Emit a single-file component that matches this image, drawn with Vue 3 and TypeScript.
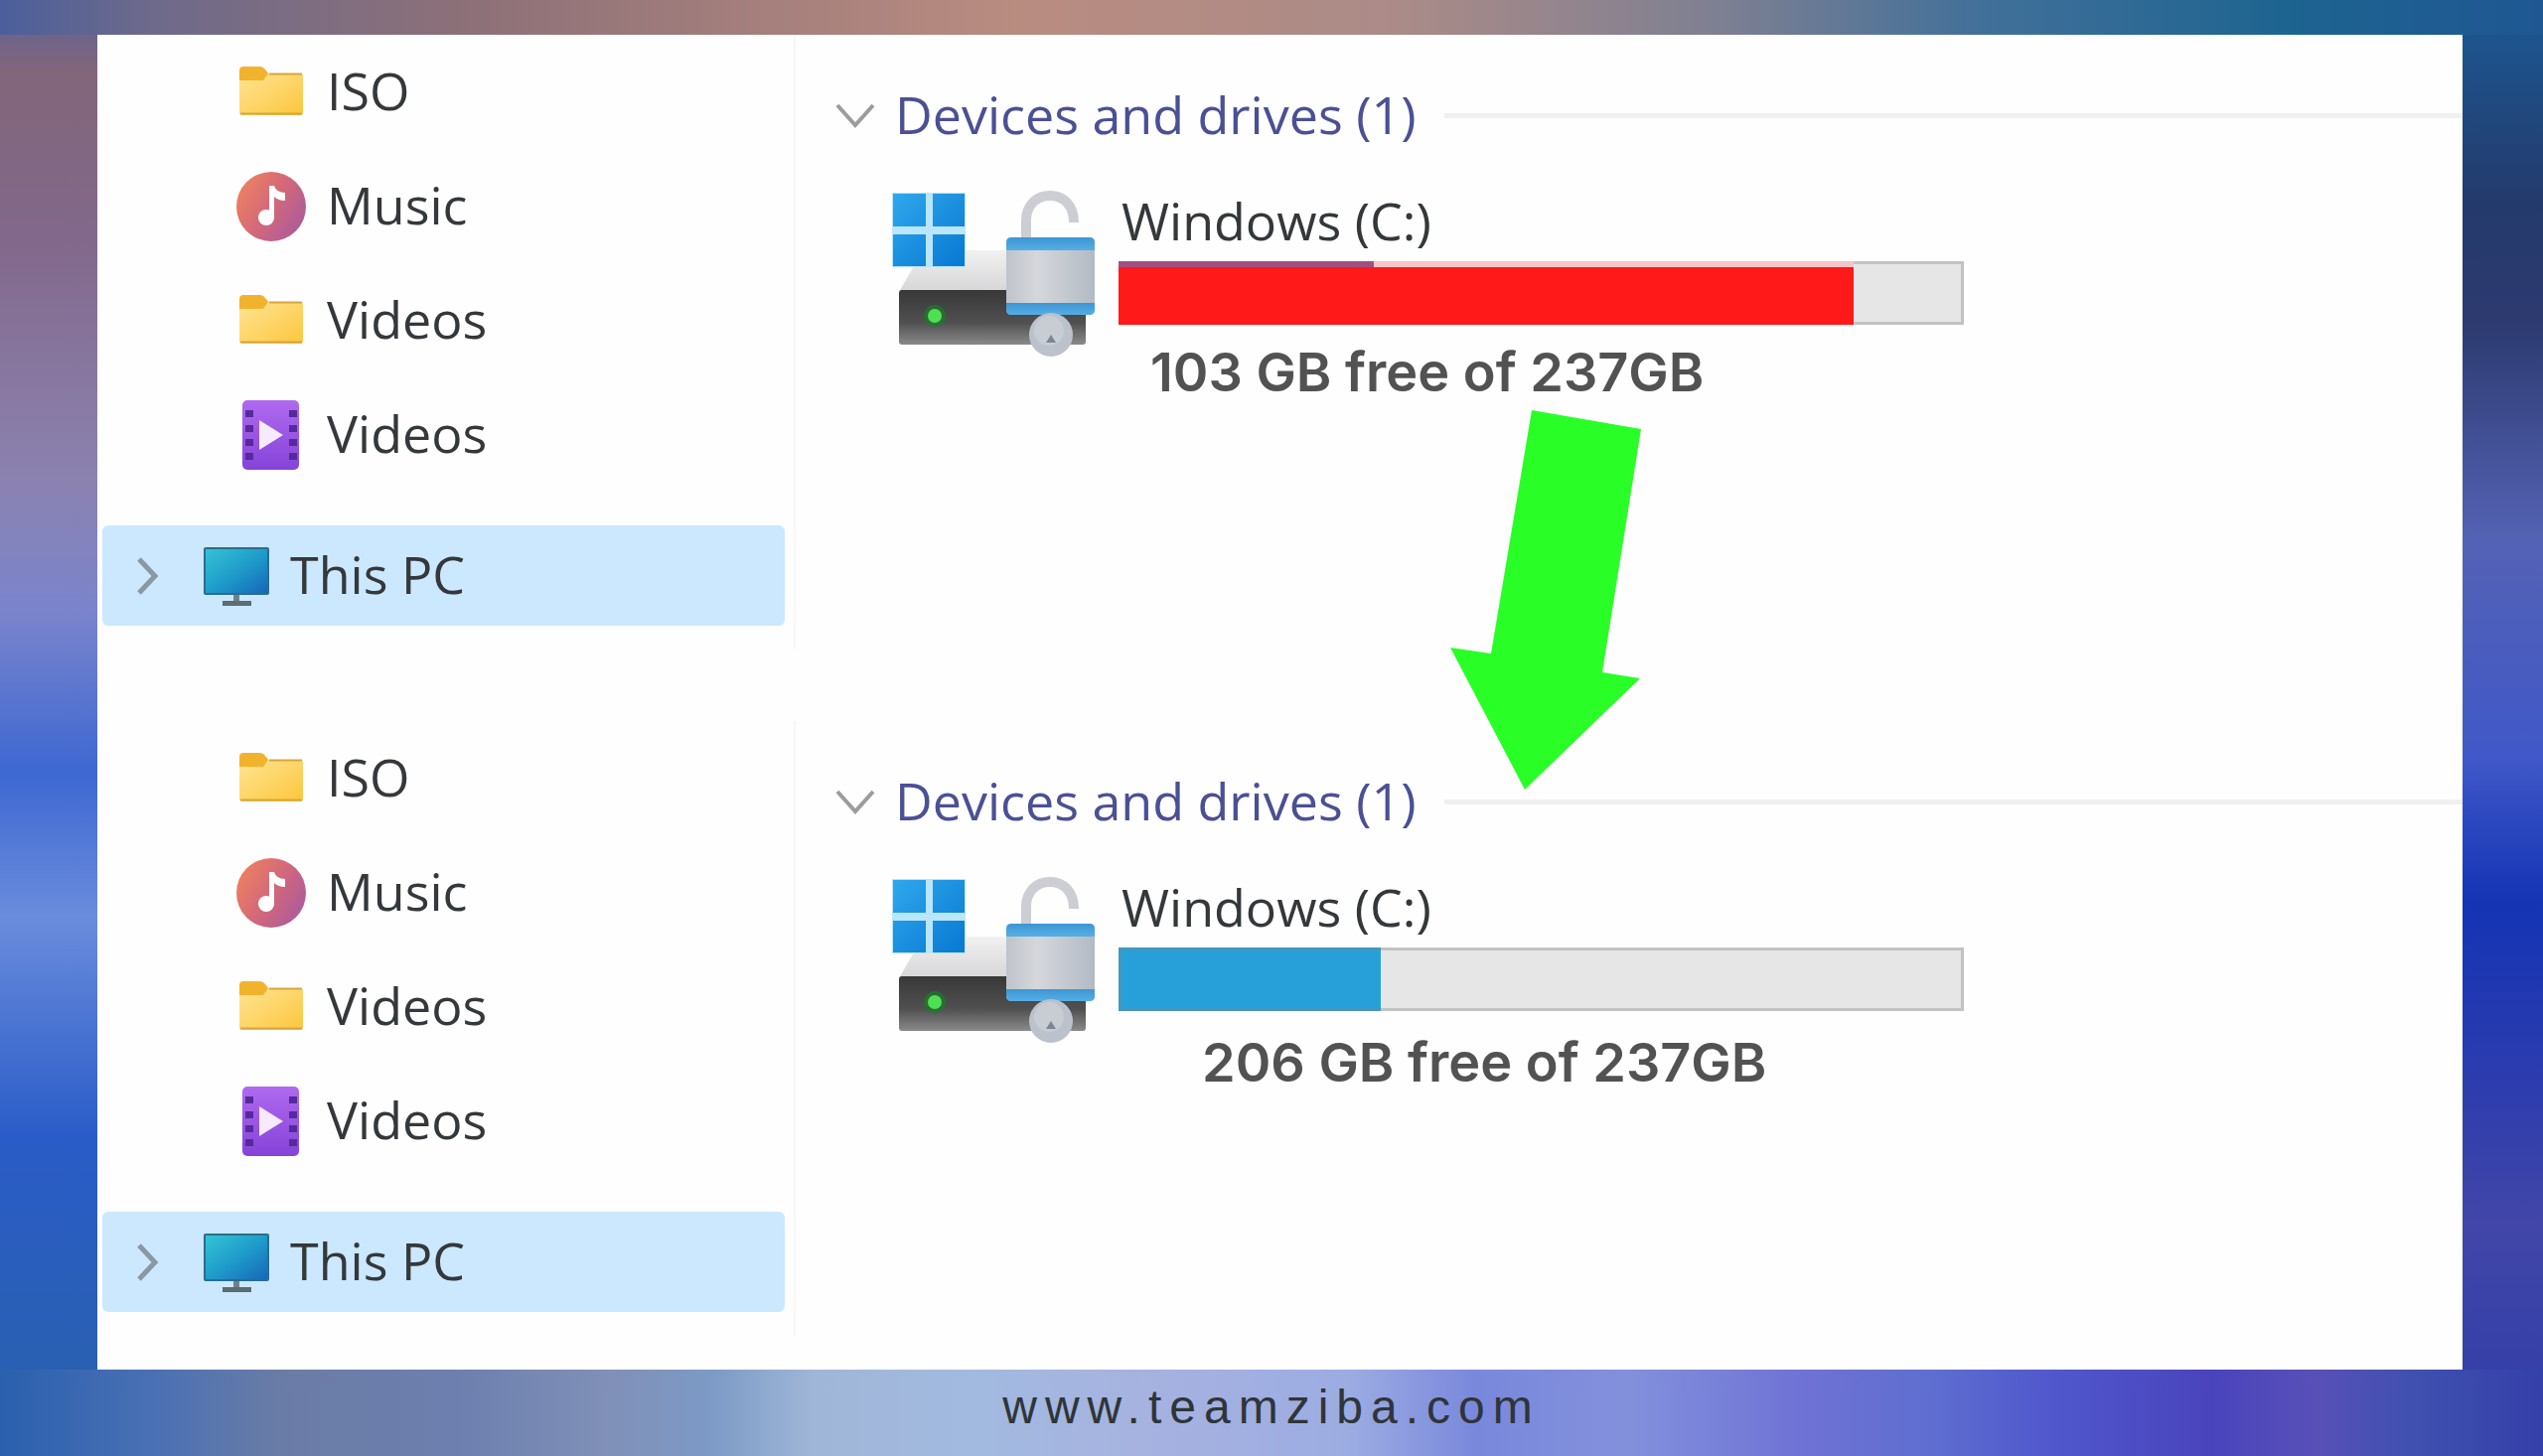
<script setup lang="ts">
interface Place {
  name: string
  icon: 'folder' | 'music' | 'film'
}

interface Snapshot {
  id: string
  state: 'low' | 'roomy'
  used: number
  free: string
}

const places: Place[] = [
  { name: 'ISO', icon: 'folder' },
  { name: 'Music', icon: 'music' },
  { name: 'Videos', icon: 'folder' },
  { name: 'Videos', icon: 'film' },
]

const snapshots: Snapshot[] = [
  { id: 'before', state: 'low', used: 87, free: '103 GB free of 237GB' },
  { id: 'after', state: 'roomy', used: 31, free: '206 GB free of 237GB' },
]
</script>

<template>
  <div class="page">
    <svg class="defs" aria-hidden="true">
      <defs>
        <linearGradient id="g-folder" x1="0" y1="0" x2="1" y2="1">
          <stop offset="0" stop-color="#ffe494" />
          <stop offset="1" stop-color="#fcc63c" />
        </linearGradient>
        <linearGradient id="g-music" x1="0" y1="0.2" x2="1" y2="0.8">
          <stop offset="0" stop-color="#ee8260" />
          <stop offset="0.5" stop-color="#d3687a" />
          <stop offset="1" stop-color="#a95a9e" />
        </linearGradient>
        <linearGradient id="g-film" x1="0" y1="0" x2="0" y2="1">
          <stop offset="0" stop-color="#b06af0" />
          <stop offset="1" stop-color="#8543d8" />
        </linearGradient>
        <linearGradient id="g-screen" x1="0" y1="0" x2="1" y2="1">
          <stop offset="0" stop-color="#35c3d4" />
          <stop offset="0.5" stop-color="#1f9dcb" />
          <stop offset="1" stop-color="#1668b8" />
        </linearGradient>
        <linearGradient id="g-win" x1="0" y1="0" x2="1" y2="1">
          <stop offset="0" stop-color="#2fa8ec" />
          <stop offset="1" stop-color="#0878d2" />
        </linearGradient>
        <linearGradient id="g-front" x1="0" y1="0" x2="0" y2="1">
          <stop offset="0" stop-color="#383838" />
          <stop offset="0.6" stop-color="#505050" />
          <stop offset="1" stop-color="#8a8a8a" />
        </linearGradient>
        <linearGradient id="g-top" x1="0" y1="0" x2="0" y2="1">
          <stop offset="0" stop-color="#f1f1f1" />
          <stop offset="1" stop-color="#d6d6d8" />
        </linearGradient>
        <linearGradient id="g-lock" x1="0" y1="0" x2="1" y2="0">
          <stop offset="0" stop-color="#bfc3ca" />
          <stop offset="0.35" stop-color="#d5d7dc" />
          <stop offset="1" stop-color="#b3bac4" />
        </linearGradient>
        <linearGradient id="g-band" x1="0" y1="0" x2="0" y2="1">
          <stop offset="0" stop-color="#3d96d2" />
          <stop offset="1" stop-color="#55aee4" />
        </linearGradient>
      </defs>
    </svg>

    <main class="card">
      <section v-for="shot in snapshots" :key="shot.id" class="panel" :class="shot.state">
        <nav class="sidebar">
          <a v-for="(place, i) in places" :key="i" class="place" href="#">
            <svg v-if="place.icon === 'folder'" class="place-icon" viewBox="0 0 72 72">
              <path d="M4 14q0-4 4-4h17q3 0 5 3l4 5v8H4z" fill="#f2b32c" />
              <path d="M4 24h24l5-7h32q3 0 3 3v36q0 3-3 3H7q-3 0-3-3z" fill="url(#g-folder)" />
              <path d="M34 17.500h33M5 57.500h62" stroke="#d8a53c" stroke-width="2" />
            </svg>
            <svg v-else-if="place.icon === 'music'" class="place-icon" viewBox="0 0 72 72">
              <circle cx="36" cy="36" r="35" fill="url(#g-music)" />
              <ellipse cx="31" cy="47" rx="8" ry="8" fill="#fff" />
              <path d="M34 15h5q2 7 11 7v8q-7 0-11-4v22h-5z" fill="#fff" />
            </svg>
            <svg v-else class="place-icon" viewBox="0 0 72 72">
              <rect x="7" y="1" width="57" height="70" rx="5" fill="url(#g-film)" />
              <path
                d="M10 11h8v7h-8zM10 26h8v7h-8zM10 40h8v7h-8zM10 54h8v7h-8zM54 11h8v7h-8zM54 26h8v7h-8zM54 40h8v7h-8zM54 54h8v7h-8z"
                fill="#552a9c"
              />
              <path d="M24 21l24 15-24 15z" fill="#f6eaff" />
            </svg>
            <span class="label">{{ place.name }}</span>
          </a>
          <a class="this-pc" href="#" aria-current="page">
            <svg class="twist" viewBox="0 0 24 40">
              <path d="M3 3l16 17L3 37" fill="none" stroke="#8b98a3" stroke-width="5" />
            </svg>
            <svg class="pc-icon" viewBox="0 0 68 62">
              <rect x="1" y="2" width="66" height="48" rx="2" fill="#2b6d8c" />
              <rect x="3" y="4" width="62" height="44" fill="url(#g-screen)" />
              <path d="M31 50h6v6h-6z" fill="#6f8088" />
              <path d="M20 56h29v5H20z" fill="#5c6c74" />
            </svg>
            <span class="label">This PC</span>
          </a>
        </nav>

        <div class="content">
          <h2 class="group">
            <button class="group-toggle" type="button" aria-expanded="true">
              <svg class="fold" viewBox="0 0 40 26">
                <path d="M2 2l18 20L38 2" fill="none" stroke="#9c9c9c" stroke-width="4" />
              </svg>
              <span class="label">Devices and drives (1)</span>
            </button>
          </h2>

          <div class="drive">
            <svg class="drive-icon" viewBox="0 0 212 172">
              <path d="M34 62h160l4 42H10z" fill="url(#g-top)" />
              <rect x="10" y="102" width="188" height="55" rx="3" fill="url(#g-front)" />
              <circle cx="46" cy="128" r="11" fill="#1e7a2a" opacity="0.7" />
              <circle cx="46" cy="128" r="7" fill="#4ee052" />
              <rect x="3" y="4" width="74" height="75" fill="#b9e6fb" />
              <path
                d="M4 5h33v33H4zM44 5h32v33H44zM4 46h33v32H4zM44 46h32v32H44z"
                fill="url(#g-win)"
              />
              <path
                d="M138 52V32c0-15 10-25 24-25 14 0 24 10 24 27"
                fill="none"
                stroke="#cdced3"
                stroke-width="10"
              />
              <rect x="118" y="50" width="89" height="77" rx="5" fill="url(#g-lock)" />
              <path d="M118 62v-8q0-5 5-5h79q5 0 5 5v8z" fill="url(#g-band)" />
              <path d="M118 115h89v7q0 5-5 5h-79q-5 0-5-5z" fill="url(#g-band)" />
              <circle cx="163" cy="147" r="22" fill="#bcc2cb" />
              <circle cx="161" cy="143" r="15" fill="#c8cdd4" />
              <path d="M163 147l5 8h-10z" fill="#7d8794" />
            </svg>
            <div class="drive-info">
              <div class="drive-name">Windows (C:)</div>
              <div
                class="bar"
                role="meter"
                aria-label="Used space"
                aria-valuemin="0"
                aria-valuemax="100"
                :aria-valuenow="shot.used"
              >
                <div class="fill" :style="{ width: shot.used + '%' }"></div>
              </div>
              <div class="free">{{ shot.free }}</div>
            </div>
          </div>
        </div>
      </section>

      <svg class="arrow" viewBox="0 0 194 384" aria-hidden="true">
        <path d="M83 1l110 19-39 245 38 6L76 383 1 240l41 6z" fill="#29ff27" />
      </svg>
    </main>

    <footer class="footer"><a href="#">www.teamziba.com</a></footer>
  </div>
</template>

<style>
body {
  margin: 0;
}
</style>

<style scoped>
.page {
  display: flex;
  flex-direction: column;
  min-height: 100vh;
  padding: 35px 81px 0 98px;
  box-sizing: border-box;
  font-family: "Open Sans", "Noto Sans", sans-serif;
  font-size: 52px;
  line-height: 72px;
  color: #35383b;
  background:
    linear-gradient(90deg, #2a60ae 0%, #4a70b4 6%, #6a7ca6 11%, #6c7fae 18%, #8090b8 24%, #7c9ac6 28%, #a0b6d8 32%, #a2bae0 38%, #a6b2e0 45%, #9cace2 53%, #7a88dc 58%, #8290dc 64%, #6e72d4 71%, #5e6ed0 76%, #4f56cc 81%, #4a44bc 87%, #5850b8 91%, #3f50b0 95%, #3540a8 100%) bottom / 100% 87px no-repeat,
    linear-gradient(90deg, #4b5f9c 0%, #6e6a8a 6%, #8c7078 18%, #b98c80 40%, #ab8b88 55%, #7c7f92 68%, #41709a 78%, #1d6490 90%, #1f5792 100%) top / 100% 35px no-repeat,
    linear-gradient(180deg, #5c6298 0%, #82667a 5%, #82688a 16%, #8b82b0 33%, #7a84cc 42%, #3e68d2 53%, #6a8cdc 63%, #2a5cc8 78%, #2a60b2 94%) left / 98px 100% no-repeat,
    linear-gradient(180deg, #1c5a94 0%, #243a6c 14%, #2c3a70 22%, #5462b4 37%, #4058c8 52%, #1434b4 62%, #2c3cae 74%, #4246a8 84%, #3540a8 94%) right / 81px 100% no-repeat;
}

.defs {
  position: absolute;
  width: 0;
  height: 0;
}

.card {
  position: relative;
  display: flex;
  flex-direction: column;
  background: #fefefe;
}

.panel {
  display: flex;
  padding-bottom: 34px;
}

.panel:first-child {
  padding-bottom: 72px;
}

.sidebar {
  display: flex;
  flex-direction: column;
  width: 703px;
  flex: none;
  padding: 0 9px 24px 5px;
  box-sizing: border-box;
  border-right: 2px solid #f7f7f7;
}

.place,
.this-pc {
  display: flex;
  align-items: center;
  color: inherit;
  text-decoration: none;
}

.label {
  padding-bottom: 3px;
}

.place {
  gap: 20px;
  height: 115px;
  padding-left: 134px;
}

.place-icon {
  width: 72px;
  height: 72px;
}

.this-pc {
  height: 101px;
  margin-top: 34px;
  padding-left: 34px;
  border-radius: 6px;
  background: #cce8ff;
}

.twist {
  width: 24px;
  height: 40px;
  margin-right: 43px;
}

.pc-icon {
  width: 68px;
  height: 62px;
  margin-right: 20px;
}

.content {
  flex: 1;
  min-width: 0;
  padding: 44px 0 0 40px;
}

.group {
  display: flex;
  align-items: center;
  gap: 28px;
  margin: 0;
  font: inherit;
}

.group::after {
  content: "";
  flex: 1;
  height: 5px;
  background: #f0f0f0;
}

.group-toggle {
  display: flex;
  align-items: center;
  gap: 20px;
  padding: 0;
  border: 0;
  background: none;
  color: #4b5095;
  font: inherit;
}

.fold {
  width: 40px;
  height: 26px;
}

.drive {
  display: flex;
  gap: 19px;
  padding: 32px 0 0 54px;
}

.drive-icon {
  flex: none;
  width: 212px;
  height: 172px;
  margin-top: 4px;
}

.drive-name {
  padding-left: 3px;
}

.bar {
  width: 851px;
  height: 64px;
  margin-top: 5px;
  box-shadow: inset 0 0 0 3px #c2c2c2;
  background: #e6e6e6;
}

.fill {
  height: 100%;
  box-sizing: border-box;
  background: #27a0da;
  border: 3px solid #4596c0;
  border-right: 0;
}

.low .fill {
  background: #ff1919;
  border: 0;
  border-top: 6px solid #f6c4c8;
  border-image: linear-gradient(90deg, #a05080 35%, #f6c4c8 35%) 6;
  border-image-width: 6px 0 0;
}

.free {
  padding-left: 32px;
  margin-top: 12px;
  font-family: Inter, sans-serif;
  font-size: 54px;
  font-weight: 600;
  color: #525252;
}

.roomy .free {
  padding-left: 84px;
  margin-top: 16px;
}

.arrow {
  position: absolute;
  left: 1361px;
  top: 377px;
  width: 194px;
  height: 384px;
}

.footer {
  display: flex;
  justify-content: center;
  align-items: center;
  height: 87px;
  margin: 0 -81px 0 -98px;
  padding-bottom: 12px;
  box-sizing: border-box;
  font-family: "Liberation Sans", Arial, sans-serif;
  font-size: 48px;
  letter-spacing: 8px;
}

.footer a {
  color: #2f3538;
  text-decoration: none;
}
</style>
